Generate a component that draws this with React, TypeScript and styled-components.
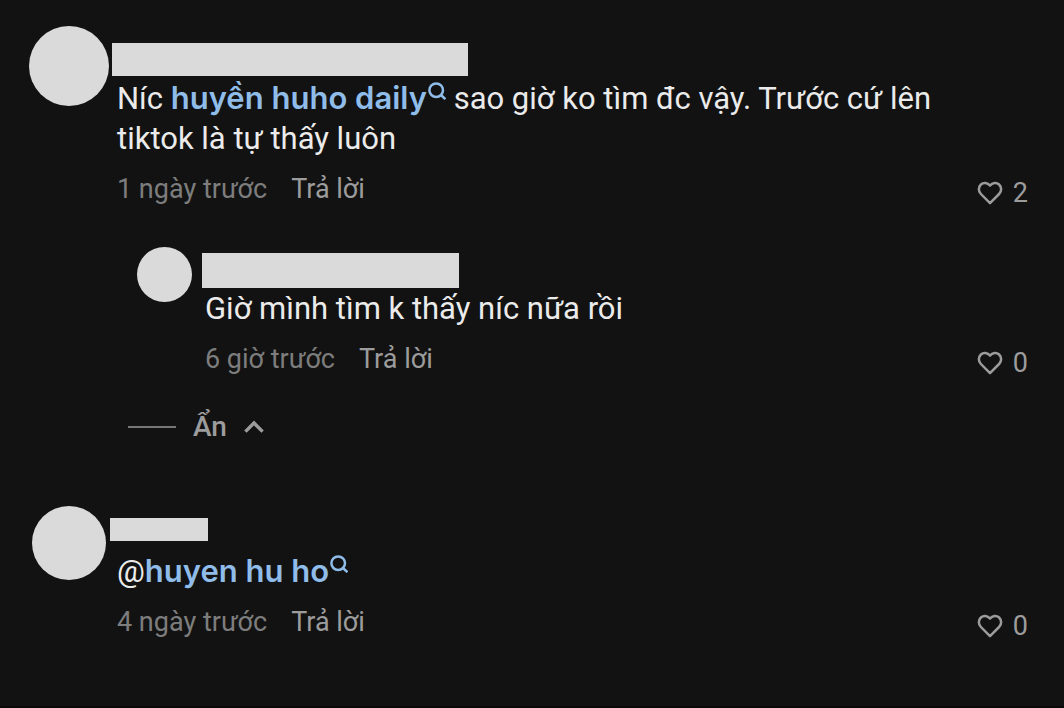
import React from 'react';
import styled, { createGlobalStyle } from 'styled-components';

const GlobalStyle = createGlobalStyle`
  * { box-sizing: border-box; }
  body {
    margin: 0;
    background: #121212;
    color: #ebebeb;
    font-family: Roboto, "Liberation Sans", sans-serif;
  }
`;

const Page = styled.main`
  min-height: 100vh;
  padding: 26px 36px 60px 21px;
  border-bottom: 2px solid #0b0909;
`;

const Thread = styled.section`
  & + & { margin-top: 61px; }
`;

const Comment = styled.article`
  display: flex;
  align-items: flex-start;
`;

const ReplyList = styled.div`
  margin-top: 36px;
  padding-left: 103px;
`;

const AvatarColumn = styled.div<{ $nested?: boolean }>`
  flex: none;
  display: flex;
  justify-content: center;
  width: ${(p) => (p.$nested ? 81 : 96)}px;
`;

const Avatar = styled.div<{ $size: number }>`
  width: ${(p) => p.$size}px;
  height: ${(p) => p.$size}px;
  border-radius: 50%;
  background: #dadada;
`;

const Body = styled.div<{ $top: number }>`
  flex: 1;
  min-width: 0;
  padding: ${(p) => p.$top}px 0 4px;
`;

const NameBar = styled.div<{ $width: number; $height: number; $outset: number; $gap: number }>`
  width: ${(p) => p.$width}px;
  max-width: 100%;
  height: ${(p) => p.$height}px;
  margin: 0 0 ${(p) => p.$gap}px -${(p) => p.$outset}px;
  background: #dadada;
`;

const Text = styled.p`
  margin: 0;
  font-size: 31px;
  line-height: 40px;
`;

const SearchLink = styled.a`
  color: #8fbce8;
  font-family: Inter, Roboto, sans-serif;
  font-weight: 600;
  line-height: 1;
  text-decoration: none;
`;

const SearchGlyph = styled.svg`
  width: 18px;
  height: 18px;
  margin-left: 1px;
  vertical-align: 9px;
`;

const Meta = styled.div`
  display: flex;
  align-items: baseline;
  gap: 24px;
  margin-top: 12px;
  line-height: 36px;
`;

const Time = styled.span`
  color: #7d7d7d;
  font-size: 27px;
`;

const PlainButton = styled.button`
  padding: 0;
  border: 0;
  background: none;
  color: #9c9c9c;
  font-family: inherit;
  line-height: 36px;
  cursor: pointer;
`;

const ReplyButton = styled(PlainButton)`
  font-size: 27px;
`;

const LikeButton = styled(PlainButton)`
  flex: none;
  align-self: flex-end;
  display: flex;
  align-items: center;
  gap: 10px;
  margin-left: 24px;
  font-size: 27px;
`;

const HideButton = styled(PlainButton)`
  display: flex;
  align-items: center;
  gap: 17px;
  margin: 28px 0 0 4px;
  font-size: 28px;
  font-weight: 500;
`;

const Rule = styled.span`
  width: 48px;
  height: 2px;
  background: #777;
`;

const Search = () => (
  <SearchGlyph viewBox="0 0 18 18" fill="none" stroke="currentColor" strokeWidth="2.5" aria-hidden="true">
    <circle cx="8.2" cy="8.2" r="6.8" />
    <path d="M13 13 17.4 17.2" />
  </SearchGlyph>
);

const Heart = () => (
  <svg width="26" height="24" viewBox="0 0 26 24" fill="none" stroke="currentColor" strokeWidth="2.5" strokeLinejoin="round" aria-hidden="true">
    <path d="M13 4.6C10.6 1.4 6.4 1.2 3.9 3.5 1.2 6.1 1.2 10.2 3.9 13L13 22.2 22.1 13C24.8 10.2 24.8 6.1 22.1 3.5 19.6 1.2 15.4 1.4 13 4.6Z" />
  </svg>
);

const Chevron = () => (
  <svg width="20" height="14" viewBox="0 0 20 14" fill="none" stroke="currentColor" strokeWidth="3.4" aria-hidden="true">
    <path d="M1.4 11.6 10 3 18.6 11.6" />
  </svg>
);

type EntryProps = {
  nested?: boolean;
  avatar: number;
  top: number;
  bar: { width: number; height: number; outset: number; gap: number };
  time: string;
  likes: number;
  children: React.ReactNode;
};

const Entry = ({ nested, avatar, top, bar, time, likes, children }: EntryProps) => (
  <Comment>
    <AvatarColumn $nested={nested}>
      <Avatar $size={avatar} />
    </AvatarColumn>
    <Body $top={top}>
      <NameBar $width={bar.width} $height={bar.height} $outset={bar.outset} $gap={bar.gap} />
      <Text>{children}</Text>
      <Meta>
        <Time>{time}</Time>
        <ReplyButton type="button">Trả lời</ReplyButton>
      </Meta>
    </Body>
    <LikeButton type="button" aria-label={`Thích, ${likes}`}>
      <Heart />
      {likes}
    </LikeButton>
  </Comment>
);

export default function App() {
  return (
    <>
      <GlobalStyle />
      <Page>
        <Thread>
          <Entry avatar={80} top={17} bar={{ width: 356, height: 33, outset: 5, gap: 3 }} time="1 ngày trước" likes={2}>
            Níc <SearchLink href="#huyen-huho-daily">huyền huho daily<Search /></SearchLink> sao giờ ko tìm đc vậy. Trước cứ lên tiktok là tự thấy luôn
          </Entry>
          <ReplyList>
            <Entry nested avatar={55} top={6} bar={{ width: 257, height: 35, outset: 3, gap: 1 }} time="6 giờ trước" likes={0}>
              Giờ mình tìm k thấy níc nữa rồi
            </Entry>
            <HideButton type="button">
              <Rule />
              Ẩn
              <Chevron />
            </HideButton>
          </ReplyList>
        </Thread>
        <Thread>
          <Entry avatar={74} top={12} bar={{ width: 98, height: 23, outset: 7, gap: 11 }} time="4 ngày trước" likes={0}>
            @<SearchLink href="#huyen-hu-ho">huyen hu ho<Search /></SearchLink>
          </Entry>
        </Thread>
      </Page>
    </>
  );
}
